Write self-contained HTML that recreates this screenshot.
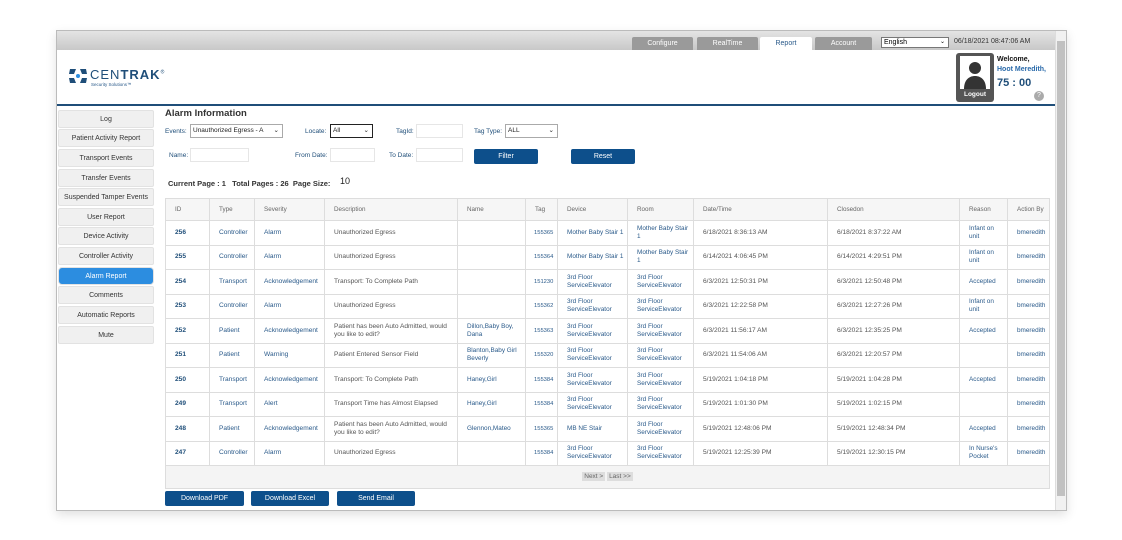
<!DOCTYPE html>
<html><head><meta charset="utf-8"><style>
*{box-sizing:border-box;margin:0;padding:0}
body{width:1122px;height:540px;background:#fff;font-family:"Liberation Sans",Arial,sans-serif;position:relative;overflow:hidden}
.frame{position:absolute;left:56px;top:30px;width:1011px;height:481px;border:1px solid #bbb;background:#fff;box-shadow:0 4px 10px rgba(0,0,0,.12)}
.topbar{position:absolute;left:0;top:0;width:998px;height:19px;background:linear-gradient(#e4e4e4,#c8c8c8)}
.tab{position:absolute;top:6px;height:13px;font-size:7px;color:#fff;text-align:center;line-height:13px;background:#9a9a9a;border-radius:2px 2px 0 0}
.scroll{position:absolute;right:0;top:0;width:11px;height:479px;background:#f1f1f1;border-left:1px solid #ddd}
.scroll .th{position:absolute;left:1px;top:10px;width:8px;height:455px;background:#c1c1c1}
.a{position:absolute}
.hdrline{position:absolute;left:0;top:73px;width:998px;height:2px;background:#1f4e79}
.side{position:absolute;left:1px;width:96px;height:18px;background:#f0f0f0;border:1px solid #e2e2e2;border-radius:2px;font-size:7px;color:#333;text-align:center;line-height:17px}
.side.act{background:#2c8de0;color:#fff;border-radius:4px}
.lbl{position:absolute;font-size:6.5px;color:#1f4e79}
.inp{position:absolute;height:14px;border:1px solid #e6e6e6;background:#fff;font-size:6.5px;line-height:12px;padding-left:2px;color:#222}
.btn{position:absolute;height:15px;background:#0d4f8b;color:#fff;font-size:7px;text-align:center;line-height:15px;border-radius:2px}
table{position:absolute;left:108px;top:167px;border-collapse:collapse;font-size:6.6px;color:#555;table-layout:fixed;width:884px}
td{border:1px solid #ddd;height:24.5px;padding:0 3px 0 9px;vertical-align:middle;line-height:8px;overflow:hidden}
tr.h td{height:22px;background:#f6f6f6;color:#666;font-size:6.3px}
.b{color:#1f4e79;font-weight:bold}
.l{color:#2a5a8a}
.s{font-size:6.4px}
td.t{padding-left:8px;font-size:5.8px}
</style></head><body>
<div class="frame">
<div class="topbar"></div>
<div class="tab" style="left:575px;width:61px">Configure</div>
<div class="tab" style="left:640px;width:61px">RealTime</div>
<div class="tab" style="left:703px;width:52px;background:#fff;color:#2a5a8a">Report</div>
<div class="tab" style="left:758px;width:57px">Account</div>
<div class="a" style="left:824px;top:6px;width:68px;height:11px;border:1px solid #777;background:#fff;font-size:7px;line-height:9px;padding-left:2px">English<span style="position:absolute;right:3px;font-size:6px">⌄</span></div>
<div class="a" style="left:897px;top:7px;font-size:7px;color:#333">06/18/2021 08:47:06 AM</div>
<div class="scroll"><div class="th"></div></div>
<svg class="a" style="left:11px;top:36px" width="20" height="18" viewBox="0 0 20 18"><g fill="#1f4e79"><path d="M2 2h6l-2 5H1z"/><path d="M12 2h6l1 5h-5z"/><path d="M1 11h5l2 5H2z"/><path d="M14 11h5l-1 5h-6z"/></g><circle cx="10" cy="9" r="2" fill="#2c8de0"/></svg>
<div class="a" style="left:33px;top:36px;font-size:13px;letter-spacing:1px;color:#1f4e79">CEN<b>TRAK</b><sup style="font-size:5px">®</sup></div>
<div class="a" style="left:34px;top:51px;font-size:4.5px;color:#2a5a8a">Security Solutions™</div>
<div class="a" style="left:899px;top:22px;width:38px;height:49px;background:#555;border-radius:3px"></div>
<div class="a" style="left:903px;top:25px;width:30px;height:33px;background:#fff"></div>
<svg class="a" style="left:904px;top:28px" width="28" height="30" viewBox="0 0 28 30"><circle cx="14" cy="9" r="6" fill="#333"/><path d="M3 30c0-9 5-13 11-13s11 4 11 13z" fill="#333"/></svg>
<div class="a" style="left:899px;top:60px;width:38px;text-align:center;color:#fff;font-size:6.5px;font-weight:bold">Logout</div>
<div class="a" style="left:940px;top:25px;font-size:7px;font-weight:bold;color:#111">Welcome,</div>
<div class="a" style="left:940px;top:35px;font-size:7px;font-weight:bold;color:#2a6aaa">Hoot Meredith,</div>
<div class="a" style="left:940px;top:46px;font-size:11px;font-weight:bold;color:#1f4e79">75 : 00</div>
<div class="a" style="left:977px;top:60px;width:10px;height:10px;border-radius:50%;background:#aaa;color:#fff;font-size:7px;text-align:center;line-height:10px">?</div>
<div class="hdrline"></div>
<div class="side" style="top:79px">Log</div>
<div class="side" style="top:98px">Patient Activity Report</div>
<div class="side" style="top:118px">Transport Events</div>
<div class="side" style="top:138px">Transfer Events</div>
<div class="side" style="top:157px">Suspended Tamper Events</div>
<div class="side" style="top:177px">User Report</div>
<div class="side" style="top:196px">Device Activity</div>
<div class="side" style="top:216px">Controller Activity</div>
<div class="side act" style="top:236px">Alarm Report</div>
<div class="side" style="top:255px">Comments</div>
<div class="side" style="top:275px">Automatic Reports</div>
<div class="side" style="top:295px">Mute</div>
<div class="a" style="left:108px;top:77px;font-size:9.5px;font-weight:bold;color:#333">Alarm Information</div>
<div class="lbl" style="left:108px;top:97px">Events:</div>
<div class="inp" style="left:133px;top:93px;width:93px;border-color:#aaa">Unauthorized Egress - A<span style="position:absolute;right:3px">⌄</span></div>
<div class="lbl" style="left:248px;top:97px">Locate:</div>
<div class="inp" style="left:273px;top:93px;width:43px;border:1px solid #222">All<span style="position:absolute;right:3px">⌄</span></div>
<div class="lbl" style="left:339px;top:97px">TagId:</div>
<div class="inp" style="left:359px;top:93px;width:47px"></div>
<div class="lbl" style="left:417px;top:97px">Tag Type:</div>
<div class="inp" style="left:448px;top:93px;width:53px;border-color:#aaa">ALL<span style="position:absolute;right:3px">⌄</span></div>
<div class="lbl" style="left:112px;top:121px">Name:</div>
<div class="inp" style="left:133px;top:117px;width:59px"></div>
<div class="lbl" style="left:238px;top:121px">From Date:</div>
<div class="inp" style="left:273px;top:117px;width:45px"></div>
<div class="lbl" style="left:332px;top:121px">To Date:</div>
<div class="inp" style="left:359px;top:117px;width:47px"></div>
<div class="btn" style="left:417px;top:118px;width:64px">Filter</div>
<div class="btn" style="left:514px;top:118px;width:64px">Reset</div>
<div class="a" style="left:111px;top:148px;font-size:7.5px;font-weight:bold;color:#333">Current Page : 1 &nbsp;&nbsp;Total Pages : 26 &nbsp;Page Size:</div>
<div class="inp" style="left:281px;top:144px;width:26px;font-size:9px;border:none">10</div>
<table>
<colgroup><col style="width:44px"><col style="width:45px"><col style="width:70px"><col style="width:133px"><col style="width:68px"><col style="width:32px"><col style="width:70px"><col style="width:66px"><col style="width:134px"><col style="width:132px"><col style="width:48px"><col style="width:42px"></colgroup>
<tr class="h"><td>ID</td><td>Type</td><td>Severity</td><td>Description</td><td>Name</td><td>Tag</td><td>Device</td><td>Room</td><td>Date/Time</td><td>Closedon</td><td>Reason</td><td>Action By</td></tr>
<tr><td class="b">256</td><td class="l">Controller</td><td class="l">Alarm</td><td>Unauthorized Egress</td><td></td><td class="l t">155365</td><td class="l s">Mother Baby Stair 1</td><td class="l s">Mother Baby Stair 1</td><td>6/18/2021 8:36:13 AM</td><td>6/18/2021 8:37:22 AM</td><td class="l s">Infant on unit</td><td class="l s">bmeredith</td></tr>
<tr><td class="b">255</td><td class="l">Controller</td><td class="l">Alarm</td><td>Unauthorized Egress</td><td></td><td class="l t">155364</td><td class="l s">Mother Baby Stair 1</td><td class="l s">Mother Baby Stair 1</td><td>6/14/2021 4:06:45 PM</td><td>6/14/2021 4:29:51 PM</td><td class="l s">Infant on unit</td><td class="l s">bmeredith</td></tr>
<tr><td class="b">254</td><td class="l">Transport</td><td class="l">Acknowledgement</td><td>Transport: To Complete Path</td><td></td><td class="l t">151230</td><td class="l s">3rd Floor ServiceElevator</td><td class="l s">3rd Floor ServiceElevator</td><td>6/3/2021 12:50:31 PM</td><td>6/3/2021 12:50:48 PM</td><td class="l s">Accepted</td><td class="l s">bmeredith</td></tr>
<tr><td class="b">253</td><td class="l">Controller</td><td class="l">Alarm</td><td>Unauthorized Egress</td><td></td><td class="l t">155362</td><td class="l s">3rd Floor ServiceElevator</td><td class="l s">3rd Floor ServiceElevator</td><td>6/3/2021 12:22:58 PM</td><td>6/3/2021 12:27:26 PM</td><td class="l s">Infant on unit</td><td class="l s">bmeredith</td></tr>
<tr><td class="b">252</td><td class="l">Patient</td><td class="l">Acknowledgement</td><td>Patient has been Auto Admitted, would you like to edit?</td><td class="l s">Dillon,Baby Boy, Dana</td><td class="l t">155363</td><td class="l s">3rd Floor ServiceElevator</td><td class="l s">3rd Floor ServiceElevator</td><td>6/3/2021 11:56:17 AM</td><td>6/3/2021 12:35:25 PM</td><td class="l s">Accepted</td><td class="l s">bmeredith</td></tr>
<tr><td class="b">251</td><td class="l">Patient</td><td class="l">Warning</td><td>Patient Entered Sensor Field</td><td class="l s">Blanton,Baby Girl Beverly</td><td class="l t">155320</td><td class="l s">3rd Floor ServiceElevator</td><td class="l s">3rd Floor ServiceElevator</td><td>6/3/2021 11:54:06 AM</td><td>6/3/2021 12:20:57 PM</td><td></td><td class="l s">bmeredith</td></tr>
<tr><td class="b">250</td><td class="l">Transport</td><td class="l">Acknowledgement</td><td>Transport: To Complete Path</td><td class="l s">Haney,Girl</td><td class="l t">155384</td><td class="l s">3rd Floor ServiceElevator</td><td class="l s">3rd Floor ServiceElevator</td><td>5/19/2021 1:04:18 PM</td><td>5/19/2021 1:04:28 PM</td><td class="l s">Accepted</td><td class="l s">bmeredith</td></tr>
<tr><td class="b">249</td><td class="l">Transport</td><td class="l">Alert</td><td>Transport Time has Almost Elapsed</td><td class="l s">Haney,Girl</td><td class="l t">155384</td><td class="l s">3rd Floor ServiceElevator</td><td class="l s">3rd Floor ServiceElevator</td><td>5/19/2021 1:01:30 PM</td><td>5/19/2021 1:02:15 PM</td><td></td><td class="l s">bmeredith</td></tr>
<tr><td class="b">248</td><td class="l">Patient</td><td class="l">Acknowledgement</td><td>Patient has been Auto Admitted, would you like to edit?</td><td class="l s">Glennon,Mateo</td><td class="l t">155365</td><td class="l s">MB NE Stair</td><td class="l s">3rd Floor ServiceElevator</td><td>5/19/2021 12:48:06 PM</td><td>5/19/2021 12:48:34 PM</td><td class="l s">Accepted</td><td class="l s">bmeredith</td></tr>
<tr><td class="b">247</td><td class="l">Controller</td><td class="l">Alarm</td><td>Unauthorized Egress</td><td></td><td class="l t">155384</td><td class="l s">3rd Floor ServiceElevator</td><td class="l s">3rd Floor ServiceElevator</td><td>5/19/2021 12:25:39 PM</td><td>5/19/2021 12:30:15 PM</td><td class="l s">In Nurse's Pocket</td><td class="l s">bmeredith</td></tr>
<tr><td colspan="12" style="height:23px;background:#f4f4f4;text-align:center;padding:0"><span style="background:#ddd;padding:1px 2px;font-size:6.5px;color:#666">Next &gt;</span> <span style="background:#ddd;padding:1px 2px;font-size:6.5px;color:#666">Last &gt;&gt;</span></td></tr>
</table>
<div class="btn" style="left:108px;top:460px;width:79px">Download PDF</div>
<div class="btn" style="left:194px;top:460px;width:78px">Download Excel</div>
<div class="btn" style="left:280px;top:460px;width:78px">Send Email</div>
</div>
</body></html>
